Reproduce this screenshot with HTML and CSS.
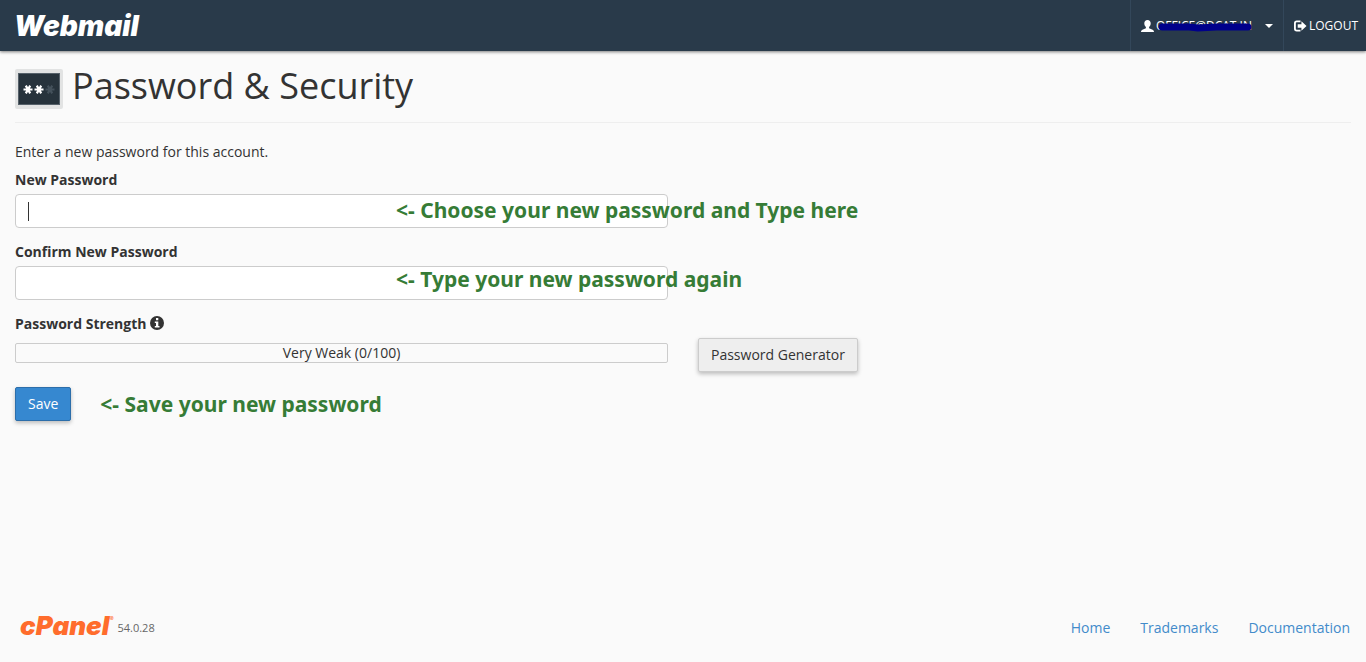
FILE: index.html
```html
<!DOCTYPE html>
<html lang="en">
<head>
<meta charset="utf-8">
<title>Webmail - Password &amp; Security</title>
<meta name="viewport" content="width=device-width, initial-scale=1">
<link rel="stylesheet" href="styles.css">
</head>
<body>
<header class="topbar">
  <a class="brand" href="#">Webmail</a>
  <nav class="account">
    <button class="account-item user" type="button">
      <svg class="icon-user" viewBox="0 0 13 12" aria-hidden="true"><path d="M6.500 0C8.500 0 9.700 1.300 9.700 3.300C9.700 5 9 6.300 8.100 7V8.200L11.600 9.700C12.600 10.200 13 10.800 13 12H0C0 10.800.400 10.200 1.400 9.700L4.900 8.200V7C4 6.300 3.300 5 3.300 3.300C3.300 1.300 4.500 0 6.500 0Z"/></svg>
      <span class="username">OFFICE@DCAT.IN
        <svg class="redaction" viewBox="0 0 92 10" preserveAspectRatio="none" aria-hidden="true"><path d="M6 5L20 5L32 5L40 6L58 5L72 5L88 5"/></svg>
      </span>
      <span class="caret"></span>
    </button>
    <a class="account-item logout" href="#">
      <svg class="icon-logout" viewBox="0 0 14 12" aria-hidden="true"><path class="frame" d="M7 1H3Q1 1 1 3V9Q1 11 3 11H7"/><path class="arrow" d="M4 4H8V1L13.500 6L8 11V8H4Z"/></svg>
      <span>LOGOUT</span>
    </a>
  </nav>
</header>
<main class="content">
  <div class="page-head">
    <svg class="page-icon" viewBox="0 0 48 40" aria-hidden="true">
      <rect width="48" height="40" rx="2" fill="#e2e3e3"/>
      <rect x="3.500" y="4.500" width="41" height="31" fill="#27333c" stroke="#56616a"/>
      <g stroke="#fff" stroke-width="2.200"><path d="M8.500 20.500H17.500M10.800 16.600L15.200 24.400M15.200 16.600L10.800 24.400"/><path d="M19.500 20.500H28.500M21.800 16.600L26.200 24.400M26.200 16.600L21.800 24.400"/></g>
      <path stroke="#44515b" stroke-width="2.200" d="M30.500 20.500H39.500M32.800 16.600L37.200 24.400M37.200 16.600L32.800 24.400"/>
    </svg>
    <h1>Password &amp; Security</h1>
  </div>
  <form class="password-form">
    <p class="intro">Enter a new password for this account.</p>
    <div class="field">
      <label for="new-password">New Password</label>
      <input id="new-password" type="password">
      <span class="text-cursor"></span>
      <span class="note note-new">&lt;- Choose your new password and Type here</span>
    </div>
    <div class="field">
      <label for="confirm-password">Confirm New Password</label>
      <input id="confirm-password" type="password">
      <span class="note note-confirm">&lt;- Type your new password again</span>
    </div>
    <div class="strength-label">Password Strength
      <svg class="icon-info" viewBox="0 0 14 14" aria-hidden="true"><circle cx="7" cy="7" r="7" fill="#333"/><path fill="#fff" d="M6 2H8.300V4.200H6ZM4.800 5.500H8.300V10H9.500V11.500H4.800V10H6V7H4.800Z"/></svg>
    </div>
    <div class="strength-row">
      <div class="meter">Very Weak (0/100)</div>
      <button class="btn" type="button">Password Generator</button>
    </div>
    <div class="actions">
      <button class="btn btn-primary" type="button">Save</button>
      <span class="note">&lt;- Save your new password</span>
    </div>
  </form>
</main>
<footer class="footer">
  <div class="product"><span class="cpanel">cPanel<sup>®</sup></span><span class="version">54.0.28</span></div>
  <nav class="links"><a href="#">Home</a><a href="#">Trademarks</a><a href="#">Documentation</a></nav>
</footer>
</body>
</html>
```
FILE: styles.css
```css
* { box-sizing: border-box; }
body {
  margin: 0;
  min-height: 100vh;
  display: flex;
  flex-direction: column;
  background: #fafafa;
  color: #333;
  font: 14px/20px "Open Sans", "Noto Sans", sans-serif;
}
a { text-decoration: none; }
.topbar {
  display: flex;
  justify-content: space-between;
  height: 51px;
  padding-left: 14px;
  background: #293a4a;
  box-shadow: 0 1px 3px rgba(0, 0, 0, .5);
}
.brand {
  align-self: center;
  color: #fff;
  font: italic 900 28px/40px Inter, sans-serif;
}
.account { display: flex; }
.account-item {
  display: flex;
  align-items: center;
  gap: 2px;
  padding: 0 10px;
  border: 0;
  border-left: 1px solid #33475a;
  background: none;
  color: #fff;
  font: 12px/20px "Open Sans", sans-serif;
}
.logout { padding-right: 8px; }
.icon-user { width: 13px; height: 12px; fill: #fff; }
.icon-logout { width: 13px; height: 12px; }
.icon-logout .frame { fill: none; stroke: #fff; stroke-width: 2; }
.icon-logout .arrow { fill: #fff; stroke: #293a4a; stroke-width: 1; paint-order: stroke; }
.username { position: relative; }
.redaction {
  position: absolute;
  top: 6px;
  left: 0;
  width: 100%;
  height: 10px;
  fill: none;
  stroke: #00008b;
  stroke-width: 7;
  stroke-linecap: round;
}
.caret {
  margin-left: 11px;
  border: 4px solid transparent;
  border-top-color: #fff;
  border-bottom: 0;
}
.content { flex: 1; padding: 12px 15px 0; }
.page-head {
  display: flex;
  align-items: center;
  gap: 9px;
  height: 60px;
  padding-bottom: 14px;
  border-bottom: 1px solid #eee;
}
.page-icon { width: 48px; height: 40px; margin-top: 6px; }
h1 { margin: 0; font-size: 36px; line-height: 40px; font-weight: 400; }
.intro { margin: 19px 0 8px; }
.field { position: relative; margin-bottom: 14px; }
label, .strength-label { display: block; font-weight: 700; }
.field input {
  display: block;
  width: calc(50% - 15px);
  height: 34px;
  margin-top: 4px;
  padding: 6px 12px;
  border: 1px solid #ccc;
  border-radius: 4px;
  background: #fff;
  font: inherit;
}
.text-cursor {
  position: absolute;
  left: 13px;
  top: 32px;
  width: 1px;
  height: 19px;
  background: #333;
}
.note {
  color: #367c36;
  font: bold 21px/24px "Noto Sans", Tahoma, sans-serif;
  white-space: nowrap;
}
.note-new, .note-confirm { position: absolute; left: 381px; top: 28px; }
.note-confirm { top: 25px; }
.icon-info { width: 14px; height: 14px; vertical-align: -1px; }
.strength-row {
  display: flex;
  align-items: flex-start;
  gap: 30px;
  margin-top: 4px;
}
.meter {
  width: calc(50% - 15px);
  height: 20px;
  margin-top: 5px;
  border: 1px solid #ccc;
  border-radius: 2px;
  line-height: 18px;
  text-align: center;
}
.btn {
  height: 34px;
  padding: 6px 12px;
  border: 1px solid #ccc;
  border-radius: 2px;
  background: #eee;
  box-shadow: 0 2px 4px rgba(0, 0, 0, .25);
  color: #333;
  font: inherit;
}
.btn-primary { border-color: #2c6eaa; background: #3688d0; color: #fff; }
.actions { display: flex; align-items: center; gap: 29px; margin-top: 15px; }
.footer {
  display: flex;
  justify-content: space-between;
  align-items: center;
  padding: 0 16px 14px 20px;
}
.product { display: flex; align-items: center; gap: 4px; }
.cpanel { padding-bottom: 4px; color: #ff6c2c; font: italic 900 26px/36px Inter, sans-serif; }
.cpanel sup { font-size: 6px; line-height: 1; vertical-align: 14px; font-weight: 400; }
.version { color: #666; font-size: 11px; }
.links { display: flex; gap: 30px; }
.links a { color: #428bca; }
```
